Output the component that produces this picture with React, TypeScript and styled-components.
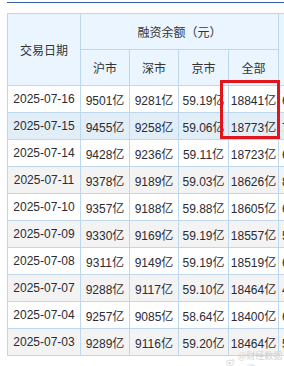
import { FC } from 'react'
import styled, { createGlobalStyle } from 'styled-components'

const GlobalStyle = createGlobalStyle`
  html, body {
    margin: 0;
    padding: 0;
    background: #fff;
  }
  body {
    font-family: 'Liberation Sans', Arial, 'Noto Sans CJK SC', sans-serif;
  }
`

const Page = styled.div`
  position: relative;
  width: 284px;
  height: 366px;
  overflow: hidden;
  background: #fff;
`

const TopRule = styled.div`
  margin-left: 7px;
  margin-top: 2px;
  height: 1px;
  background: #3561a6;
`

const TableWrap = styled.div`
  padding: 10px 0 0 7px;
`

const Table = styled.table`
  border-collapse: collapse;
  table-layout: fixed;
  width: 361px;
  font-size: 12px;
  color: #333;
`

const HeadCell = styled.th`
  background: #eaf5ff;
  border: 1px solid #bdd7ec;
  font-weight: normal;
  font-family: 'Noto Sans CJK SC', sans-serif;
  font-size: 12px;
  color: #333;
  height: 35px;
  padding: 0;
  text-align: center;
  white-space: nowrap;
  overflow: hidden;
`

const Row = styled.tr<{ $tone: 'white' | 'gray' | 'hover' }>`
  background: ${(p) =>
    p.$tone === 'hover' ? '#e1eef8' : p.$tone === 'gray' ? '#f3f3f3' : '#fff'};
`

const Cell = styled.td<{ $left?: boolean }>`
  border: 1px solid #bdd7ec;
  height: 26px;
  padding: 0;
  text-align: ${(p) => (p.$left ? 'left' : 'center')};
  padding-left: ${(p) => (p.$left ? 3 : 0)}px;
  white-space: nowrap;
  overflow: hidden;
  color: #2b2b33;
`

const Unit = styled.span`
  font-family: 'Noto Sans CJK SC', sans-serif;
  font-size: 12px;
`

const Highlight = styled.div`
  position: absolute;
  left: 220px;
  top: 80px;
  width: 54px;
  height: 53px;
  border: 3px solid #e2141c;
  pointer-events: none;
`

const Mark = styled.div`
  position: absolute;
  left: 226px;
  top: 349px;
  display: flex;
  align-items: center;
  gap: 3px;
  font-family: 'Noto Sans CJK SC', sans-serif;
  font-size: 9px;
  color: #d2d2d2;
`

type Item = [string, string, string, string, string, string]

const rows: Item[] = [
  ['2025-07-16', '9501', '9281', '59.19', '18841', '6.52'],
  ['2025-07-15', '9455', '9258', '59.06', '18773', '7.18'],
  ['2025-07-14', '9428', '9236', '59.11', '18723', '6.40'],
  ['2025-07-11', '9378', '9189', '59.03', '18626', '8.32'],
  ['2025-07-10', '9357', '9188', '59.88', '18605', '6.77'],
  ['2025-07-09', '9330', '9169', '59.19', '18557', '5.91'],
  ['2025-07-08', '9311', '9149', '59.19', '18519', '6.05'],
  ['2025-07-07', '9288', '9117', '59.10', '18464', '4.86'],
  ['2025-07-04', '9257', '9085', '58.64', '18400', '6.13'],
  ['2025-07-03', '9289', '9116', '59.20', '18464', '5.49'],
]

const toneOf = (i: number): 'white' | 'gray' | 'hover' =>
  i === 1 ? 'hover' : i % 2 === 1 ? 'gray' : 'white'

const Amount: FC<{ v: string }> = ({ v }) => (
  <>
    {v}
    <Unit>亿</Unit>
  </>
)

export default function App() {
  return (
    <Page>
      <GlobalStyle />
      <TopRule />
      <TableWrap>
        <Table>
          <colgroup>
            <col style={{ width: 73 }} />
            <col style={{ width: 49 }} />
            <col style={{ width: 49 }} />
            <col style={{ width: 50 }} />
            <col style={{ width: 50 }} />
            <col style={{ width: 90 }} />
          </colgroup>
          <thead>
            <tr>
              <HeadCell rowSpan={2}>交易日期</HeadCell>
              <HeadCell colSpan={4}>融资余额（元）</HeadCell>
              <HeadCell rowSpan={2}>融资买入</HeadCell>
            </tr>
            <tr>
              <HeadCell>沪市</HeadCell>
              <HeadCell>深市</HeadCell>
              <HeadCell>京市</HeadCell>
              <HeadCell>全部</HeadCell>
            </tr>
          </thead>
          <tbody>
            {rows.map((r, i) => (
              <Row key={r[0]} $tone={toneOf(i)}>
                <Cell>{r[0]}</Cell>
                <Cell><Amount v={r[1]} /></Cell>
                <Cell><Amount v={r[2]} /></Cell>
                <Cell><Amount v={r[3]} /></Cell>
                <Cell><Amount v={r[4]} /></Cell>
                <Cell $left><Amount v={r[5]} /></Cell>
              </Row>
            ))}
          </tbody>
        </Table>
      </TableWrap>
      <Highlight />
      <Mark>
        <svg width="12" height="10" viewBox="0 0 12 10">
          <ellipse cx="5.5" cy="6" rx="5" ry="3.6" fill="none" stroke="#cfcfcf" strokeWidth="1" />
          <circle cx="5" cy="6.3" r="1.5" fill="#cfcfcf" />
          <path d="M8.5 1.2 A3 3 0 0 1 11.3 4" fill="none" stroke="#cfcfcf" strokeWidth="0.9" />
        </svg>
        <span>@财经数据一览</span>
      </Mark>
    </Page>
  )
}
